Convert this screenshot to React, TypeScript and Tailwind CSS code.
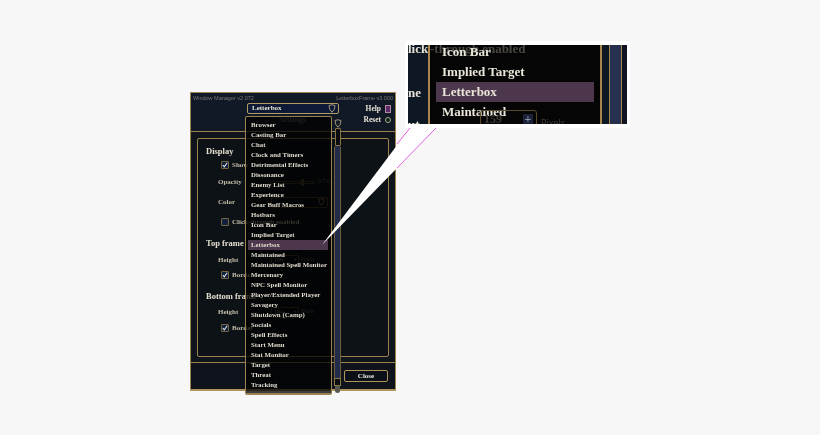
import React from "react";

const items = [
  "Browser",
  "Casting Bar",
  "Chat",
  "Clock and Timers",
  "Detrimental Effects",
  "Dissonance",
  "Enemy List",
  "Experience",
  "Gear Buff Macros",
  "Hotbars",
  "Icon Bar",
  "Implied Target",
  "Letterbox",
  "Maintained",
  "Maintained Spell Monitor",
  "Mercenary",
  "NPC Spell Monitor",
  "Player/Extended Player",
  "Savagery",
  "Shutdown (Camp)",
  "Socials",
  "Spell Effects",
  "Start Menu",
  "Stat Monitor",
  "Target",
  "Threat",
  "Tracking",
];

const serif = "font-['Liberation_Serif',serif] font-bold";

function Shield({ className }: { className: string }) {
  return (
    <svg viewBox="0 0 10 12" className={className} fill="none" stroke="#a8987a" strokeWidth="1.3">
      <path d="M1 2 Q5 0 9 2 Q9 8 5 11 Q1 8 1 2 Z" />
    </svg>
  );
}

function Check({ checked }: { checked: boolean }) {
  return (
    <span className="flex h-[8px] w-[8px] shrink-0 items-center justify-center rounded-[1px] border border-[#77663f] bg-[#10213f]">
      {checked && (
        <svg viewBox="0 0 8 8" className="h-[6px] w-[6px]" fill="none" stroke="#e8e8e8" strokeWidth="1.4">
          <path d="M1 4 L3 6.5 L7 1" />
        </svg>
      )}
    </span>
  );
}

function Section({ label, mt }: { label: string; mt: string }) {
  return (
    <div className={`${mt} flex h-[10px] items-center pl-[8px] text-[8.5px] leading-none text-[#e4dfd0] ${serif}`}>
      {label}
    </div>
  );
}

function Field({ label, mt, children }: { label: string; mt: string; children?: React.ReactNode }) {
  return (
    <div className={`${mt} flex h-[10px] items-center pl-[20px] text-[7px] leading-none text-[#c4bda8] ${serif}`}>
      <span className="w-[53px]">{label}</span>
      {children}
    </div>
  );
}

function CheckRow({ label, checked, mt }: { label: string; checked: boolean; mt: string }) {
  return (
    <div className={`${mt} flex h-[10px] items-center gap-[3px] pl-[23px] text-[7px] leading-none text-[#c4bda8] ${serif}`}>
      <Check checked={checked} />
      <span>{label}</span>
    </div>
  );
}

function Stepper({ value }: { value: string }) {
  return (
    <div className="flex items-center gap-[2px]">
      <div className="flex h-[11px] w-[28px] items-center justify-between rounded-[2px] border border-[#5a4a2a] bg-[#0b0c10] pl-[2px] pr-[1px] text-[6px] text-[#77726a]">
        <span>{value}</span>
        <span className="text-[#6f7a96]">+</span>
      </div>
      <span className="text-[5.5px] font-normal text-[#77726a]">Pixels</span>
    </div>
  );
}

function ZoomCallout() {
  return (
    <div className="absolute left-[405px] top-[41px] h-[87px] w-[225px] border-x-[3px] border-y-[4px] border-white">
      <div className="h-full w-full overflow-hidden">
        <div className="flex h-full w-full rounded-[1px] bg-[#0e1724] blur-[0.5px] will-change-transform">
          <div className={`w-[20px] shrink-0 overflow-hidden whitespace-nowrap text-[13px] leading-none text-[#e6e2d6] ${serif}`}>
            <div className="-mt-[3px]">lick</div>
            <div className="mt-[31px]">ne</div>
            <div className="mt-[19px]">ut</div>
          </div>
          <div className="relative w-[174px] shrink-0 border-x-2 border-[#a8854c] bg-[#050506]">
            <div className={`absolute -top-[3px] left-0 whitespace-nowrap text-[13px] leading-none text-[#4a4840] ${serif}`}>
              -through enabled
            </div>
            <div className={`relative flex flex-col text-[13px] leading-[20px] text-[#e9e5d8] ${serif}`}>
              <div className="-mt-[3px] pl-[12px]">Icon Bar</div>
              <div className="pl-[12px]">Implied Target</div>
              <div className="ml-[6px] w-[158px] bg-[#4c374c] pl-[6px]">Letterbox</div>
              <div className="pl-[12px]">Maintained</div>
            </div>
            <div className={`absolute -bottom-[4px] left-[50px] flex h-[18px] w-[57px] items-center justify-between rounded-[3px] border border-[#5a4a2a] pl-[3px] pr-[3px] text-[12px] leading-none text-[#3d3b34] ${serif}`}>
              <span>159</span>
              <span className="flex h-[10px] w-[10px] items-center justify-center bg-[#1a2238] text-[#8a90a8]">+</span>
            </div>
            <span className="absolute -bottom-[3px] left-[111px] text-[9px] leading-none text-[#3d3b34]">Pixels</span>
          </div>
          <div className="flex flex-1 items-stretch">
            <div className="w-[8px] border-r border-[#a8854c]" />
            <div className="w-[11px] bg-[#26304f]" />
            <div className="flex-1 border-l border-[#a8854c] bg-[#0f1422]" />
          </div>
        </div>
      </div>
    </div>
  );
}

export default function App() {
  return (
    <div className="relative h-[435px] w-[820px] overflow-hidden bg-[#f7f7f7] pl-[190px] pt-[92px]">
      {/* game window */}
      <div className="relative flex h-[299px] w-[206px] flex-col rounded-[1px] border border-[#9a8350] border-b-2 border-b-[#b0935a] bg-[#10151c] blur-[0.6px] will-change-transform">
        <div className="relative h-[39px] shrink-0 border-b border-[#9a8350] bg-[#111826]">
          <div className="flex items-center justify-between px-[2px] pt-[2px] font-['Liberation_Sans',sans-serif] text-[5.5px] leading-[7px] text-[#7c7a76]">
            <span>Window Manager v2.072</span>
            <span>LetterboxFrame v3.000</span>
          </div>
          <div className={`mt-[1px] flex items-center pl-[56px] pr-[4px] text-[7.5px] leading-none text-[#e8e4d8] ${serif}`}>
            <div className="flex h-[11px] w-[92px] items-center justify-between rounded-[2px] border border-[#b09a66] bg-[#0e1a35] pl-[4px] pr-[2px] text-[7px]">
              <span>Letterbox</span>
              <Shield className="h-[9px] w-[8px]" />
            </div>
            <span className="ml-auto">Help</span>
            <span className="ml-[4px] h-[8px] w-[6px] border border-[#b08aa0] bg-[#5c2a66]" />
          </div>
          <div className={`mt-[2px] flex items-center pl-[88px] pr-[4px] text-[7.5px] leading-none ${serif}`}>
            <span className="text-[8px] text-[#77736a]">Settings</span>
            <span className="ml-auto text-[#e8e4d8]">Reset</span>
            <span className="ml-[4px] h-[6px] w-[6px] rounded-full border border-[#9bb57a]" />
          </div>
        </div>

        {/* settings panel */}
        <div className="flex-1 px-[6px] pt-[6px]">
          <div className="h-[219px] rounded-[2px] border border-[#9a8350] bg-[#0d1217] pt-[7px]">
            <Section label="Display" mt="mt-0" />
            <CheckRow label="Show" checked mt="mt-[4px]" />
            <Field label="Opacity" mt="mt-[7px]">
              <div className="ml-[-1px] flex items-center gap-[4px]">
                <div className="relative h-[3px] w-[44px] border border-[#4c4330]">
                  <div className="absolute left-[30px] top-[-3px] h-[7px] w-[3px] bg-[#5c5038]" />
                </div>
                <span className="text-[5.5px] font-normal text-[#8c8a86]">0.7%</span>
              </div>
            </Field>
            <Field label="Color" mt="mt-[10px]">
              <div className="flex h-[11px] w-[57px] items-center justify-end rounded-[2px] border border-[#5a4a2a] bg-[#0b0c10] pr-[2px]">
                <Shield className="h-[8px] w-[7px]" />
              </div>
            </Field>
            <CheckRow label="Click-through enabled" checked={false} mt="mt-[10px]" />
            <Section label="Top frame" mt="mt-[11px]" />
            <Field label="Height" mt="mt-[7px]">
              <Stepper value="159" />
            </Field>
            <CheckRow label="Border" checked mt="mt-[5px]" />
            <Section label="Bottom frame" mt="mt-[11px]" />
            <Field label="Height" mt="mt-[6px]">
              <Stepper value="184" />
            </Field>
            <CheckRow label="Border" checked mt="mt-[6px]" />
          </div>
        </div>

        {/* footer */}
        <div className="flex h-[27px] shrink-0 items-center justify-end border-t border-[#9a8350] bg-[#0f141c] pr-[7px]">
          <button className={`h-[12px] w-[44px] rounded-[2px] border border-[#b0935a] bg-[#0b0f18] text-[7px] leading-none text-[#e8e4d8] ${serif}`}>
            Close
          </button>
        </div>

        {/* scrollbar of the open list */}
        <div className="absolute left-[142px] top-[26px] flex h-[274px] w-[9px] flex-col items-center">
          <Shield className="h-[9px] w-[8px]" />
          <div className="h-[18px] w-[6px] rounded-[1px] border border-[#8a7445] bg-[#0b0c10]" />
          <div className="w-[7px] flex-1 rounded-t-[2px] border-x border-[#6d5d3a] bg-[#222c4a]" />
          <div className="h-[8px] w-[7px] border border-[#8a7445] bg-[#0b0c10]" />
          <div className="h-[7px] w-[5px] rounded-b-full bg-[#57564f]" />
        </div>

        {/* open dropdown */}
        <div className={`absolute left-[54px] top-[23px] h-[279px] w-[87px] rounded-[2px] border border-[#9a8350] border-b-2 bg-black/75 pt-[3px] text-[6.85px] leading-[10px] text-[#dfdbce] ${serif}`}>
          {items.map((item) => (
            <div
              key={item}
              className={
                item === "Letterbox"
                  ? "ml-[2px] mr-[3px] h-[10px] bg-[#4c374c] pl-[3px]"
                  : "h-[10px] whitespace-nowrap pl-[5px]"
              }
            >
              {item}
            </div>
          ))}
        </div>
      </div>

      {/* pointer from the list row to the magnified crop */}
      <svg className="absolute left-0 top-0" width="820" height="435" viewBox="0 0 820 435">
        <path d="M322 245 L410 128 L436 128 Z" fill="#ffffff" />
        <path d="M397 144 L410 128 M397 168 L436 128" stroke="#e85ce0" strokeWidth="1" fill="none" />
      </svg>

      <ZoomCallout />
    </div>
  );
}
